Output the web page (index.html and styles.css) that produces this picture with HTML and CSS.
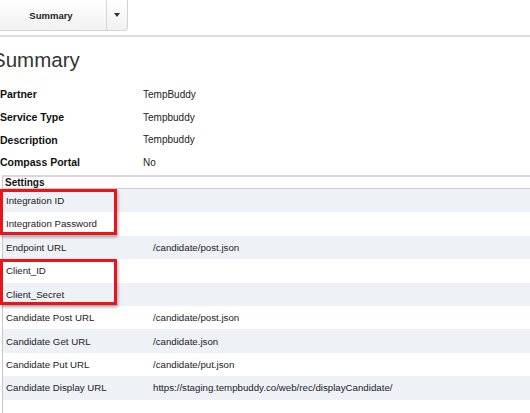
FILE: index.html
```html
<!DOCTYPE html>
<html>
<head>
<meta charset="utf-8">
<link rel="stylesheet" href="styles.css">
</head>
<body>
<div class="toolbar">
  <div class="btn-group">
    <div class="btn btn-main">Summary</div>
    <div class="btn btn-caret"><span class="caret"></span></div>
  </div>
</div>
<h1 class="title">Summary</h1>
<div class="info">
  <div class="info-row"><div class="info-label">Partner</div><div class="info-value">TempBuddy</div></div>
  <div class="info-row"><div class="info-label">Service Type</div><div class="info-value">Tempbuddy</div></div>
  <div class="info-row"><div class="info-label">Description</div><div class="info-value">Tempbuddy</div></div>
  <div class="info-row"><div class="info-label">Compass Portal</div><div class="info-value">No</div></div>
</div>
<div class="settings">
  <div class="settings-head">Settings</div>
  <div class="group marked">
    <div class="row shade"><div class="key">Integration ID</div><div class="val"></div></div>
    <div class="row"><div class="key">Integration Password</div><div class="val"></div></div>
  </div>
  <div class="row shade"><div class="key">Endpoint URL</div><div class="val">/candidate/post.json</div></div>
  <div class="group marked">
    <div class="row"><div class="key">Client_ID</div><div class="val"></div></div>
    <div class="row shade"><div class="key">Client_Secret</div><div class="val"></div></div>
  </div>
  <div class="row"><div class="key">Candidate Post URL</div><div class="val">/candidate/post.json</div></div>
  <div class="row shade"><div class="key">Candidate Get URL</div><div class="val">/candidate.json</div></div>
  <div class="row"><div class="key">Candidate Put URL</div><div class="val">/candidate/put.json</div></div>
  <div class="row shade"><div class="key">Candidate Display URL</div><div class="val">https://staging.tempbuddy.co/web/rec/displayCandidate/</div></div>
  <div class="tail"></div>
</div>
</body>
</html>
```
FILE: styles.css
```css
html, body {
  margin: 0;
  padding: 0;
  background: #ffffff;
  font-family: "Liberation Sans", Arial, sans-serif;
  color: #222;
  overflow: hidden;
}
.toolbar {
  box-sizing: border-box;
  height: 37px;
  border-bottom: 2px solid #dcdce4;
}
.btn-group {
  display: flex;
  margin-left: -5px;
  width: 133px;
  height: 31px;
}
.btn {
  box-sizing: border-box;
  height: 31px;
  display: flex;
  align-items: center;
  justify-content: center;
  background: linear-gradient(#ffffff, #f1f1f1);
  border: 1px solid #d2d2d2;
  border-top: none;
  font-size: 9.5px;
  font-weight: bold;
  color: #222;
}
.btn-main {
  width: 112px;
  border-right: 1px solid #d6d6d6;
}
.btn-caret {
  width: 21px;
  border-left: none;
  border-bottom-right-radius: 4px;
}
.caret {
  width: 0;
  height: 0;
  border-left: 3px solid transparent;
  border-right: 3px solid transparent;
  border-top: 4px solid #333;
}
.title {
  margin: 9px 0 0 -8px;
  font-size: 20.5px;
  font-weight: normal;
  color: #333;
  line-height: 28px;
  height: 37px;
}
.info {
  display: flex;
  flex-direction: column;
}
.info-row {
  display: flex;
  height: 22.7px;
  align-items: center;
  font-size: 10.5px;
}
.info-label {
  width: 143px;
  font-weight: bold;
  color: #111;
}
.info-value {
  color: #222;
  font-size: 10px;
}
.settings {
  margin-top: 1px;
  margin-left: 2px;
  border-left: 1px solid #c8c8c8;
  border-top: 2px solid #d8d8d8;
}
.settings-head {
  height: 11px;
  line-height: 11px;
  font-size: 10px;
  font-weight: bold;
  padding-left: 2px;
  border-bottom: 1.5px solid #d0d0d0;
  color: #111;
}
.group {
  position: relative;
}
.marked::after {
  content: "";
  position: absolute;
  left: -3px;
  top: 0;
  width: 117px;
  height: calc(100% - 1px);
  box-sizing: border-box;
  border: 3px solid #e8161b;
  box-shadow: 1px 2px 3px rgba(0,0,0,0.35);
}
.row {
  display: flex;
  align-items: center;
  height: 23.45px;
  font-size: 9.7px;
  color: #222;
}
.row.shade {
  background: #eef1f6;
}
.key {
  width: 147px;
  padding-left: 3px;
}
.val {
  flex: 1;
}
.tail {
  height: 20px;
}
```
